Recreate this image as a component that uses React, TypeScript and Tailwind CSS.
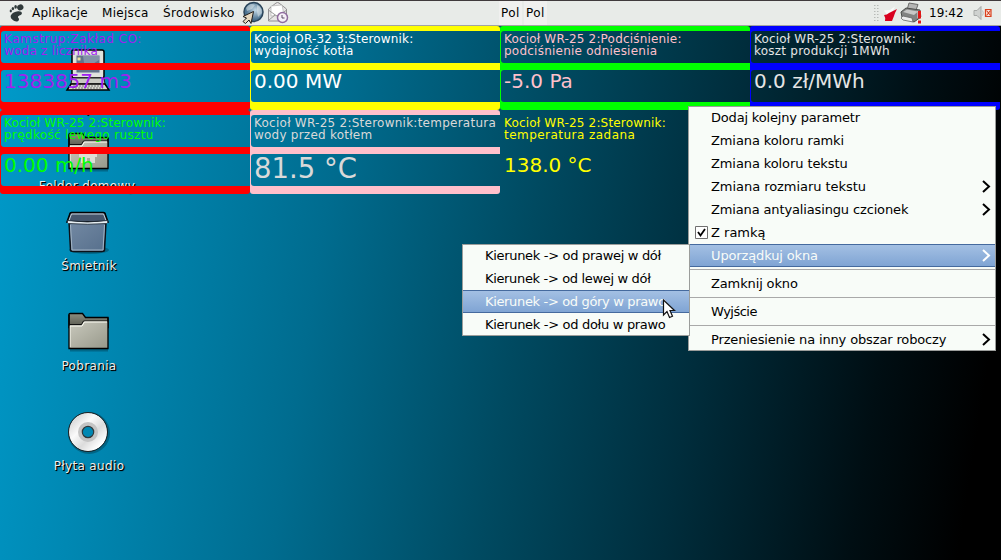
import React from "react";

type PanelProps = {
  frame: string;
  color: string;
  line1: string;
  line2: string;
  value: string;
  size?: string;
  track1?: string;
  track2?: string;
};

function Panel({
  frame,
  color,
  line1,
  line2,
  value,
  size = "text-[20px] leading-[30px]",
  track1 = "tracking-[0.18px]",
  track2 = "tracking-[0.23px]",
}: PanelProps) {
  return (
    <div className={`relative h-[84px] w-[250px] ${color}`}>
      <div className={`absolute inset-0 flex flex-col ${frame}`}>
        <div className="h-[39px] shrink-0 overflow-hidden rounded-t-[3px] pt-[5px] pl-px">
          <div className="h-8 rounded-l-[3px] shadow-[0_0_0_8px_currentColor]" />
        </div>
        <div className="h-[45px] shrink-0 overflow-hidden rounded-b-[3px] pt-[5px] pl-px">
          <div className="h-8 rounded-l-[3px] shadow-[0_0_0_8px_currentColor]" />
        </div>
      </div>
      <div className="relative h-10 pt-[7px] pl-[4px] text-[12px] leading-[12px] whitespace-nowrap">
        <div className={track1}>{line1}</div>
        <div className={track2}>{line2}</div>
      </div>
      <div className={`relative pl-1 whitespace-nowrap ${size}`}>{value}</div>
    </div>
  );
}

function Chevron({ light }: { light?: boolean }) {
  return (
    <svg className="mr-[4px] mb-[2px] ml-auto" width="9" height="13" viewBox="0 0 9 13">
      <path d="M1 1l6 5.500L1 12" fill="none" stroke={light ? "#fff" : "#000"} strokeWidth="2" />
    </svg>
  );
}

function Item({ text, track, arrow, active, check }: { text: string; track: string; arrow?: boolean; active?: boolean; check?: boolean }) {
  return (
    <div
      className={`flex h-[23px] shrink-0 items-center pt-px whitespace-nowrap ${check ? "pl-[6px]" : "pl-[22px]"} ${
        active ? "bg-linear-to-b from-[#a5c1e4] to-[#7ea3d3] text-[#f8fcf8] shadow-[inset_0_1px_#456a9e,inset_0_-1px_#456a9e]" : ""
      }`}
    >
      {check && (
        <svg className="mr-[3px] mb-[2px]" width="13" height="13" viewBox="0 0 13 13">
          <path d="M.5.5h12v12H.5z" fill="#fff" stroke="#707070" />
          <path d="M3 6l2.500 3.500L10 3" fill="none" stroke="#000" strokeWidth="1.800" />
        </svg>
      )}
      <span className={track}>{text}</span>
      {arrow && <Chevron light={active} />}
    </div>
  );
}

const Rule = () => (
  <div className="h-[5px] shrink-0 pt-[2px]">
    <div className="h-px bg-[#a9a9a9]" />
  </div>
);

function Folder({ home }: { home?: boolean }) {
  return (
    <svg width="44" height="40" viewBox="0 0 44 40">
      <defs>
        <linearGradient id="folder" x1="0" y1="0" x2="1" y2="1">
          <stop offset="0" stopColor="#c9c9bd" />
          <stop offset="1" stopColor="#97988a" />
        </linearGradient>
        <linearGradient id="tab" x1="0" y1="0" x2="0" y2="1">
          <stop offset="0" stopColor="#8d8e80" />
          <stop offset="1" stopColor="#55564c" />
        </linearGradient>
      </defs>
      <path d="M3 38h38" stroke="#003447" strokeOpacity=".4" strokeWidth="3" />
      <path d="M2 2.500q0-1 1-1h12.500l3 4H41v10H2z" fill="url(#tab)" stroke="#000" strokeWidth="1.300" />
      <path d="M3 12.500h11.500l2-3.500h24" fill="none" stroke="#111" />
      <path d="M2 13.500h12.500l2.500-4h24v27H2z" fill="url(#folder)" />
      <path d="M3 35V14h12l2.500-4H40" fill="none" stroke="#fffff5" />
      <path d="M2 2.500V36.500H41V5.500" fill="none" stroke="#000" strokeWidth="1.300" />
      {home && <path d="M12 22l9-6 9 6v3h-2v6h-5v-5h-3v5h-6v-6h-2z" fill="#deded4" />}
    </svg>
  );
}

function Label({ children }: { children: string }) {
  return (
    <span className="text-[12px] leading-4 tracking-[0.35px] whitespace-nowrap text-[#eee] [text-shadow:1px_1px_1px_#000,1px_1px_0_#000]">
      {children}
    </span>
  );
}

export default function App() {
  return (
    <div className="relative flex h-[560px] w-[1001px] flex-col overflow-hidden bg-[linear-gradient(99deg,#009bcb_0%,#0088b3_14%,#006c8f_33%,#004a61_52%,#002d3c_69%,#000e13_86%,#000_96%)] font-['DejaVu_Sans',sans-serif] text-[13px] text-black">
      <header className="relative z-20 flex h-[26px] shrink-0 items-center border-t border-b border-t-[#403a3c] border-b-[#a2a4a2] bg-[#e8ebe8] text-[12px]">
        <svg className="ml-[8px] shrink-0" width="17" height="18" viewBox="0 0 17 18">
          <g fill="#303a3b">
            <ellipse cx="12.300" cy="3.400" rx="3.200" ry="2.900" transform="rotate(-25 12.300 3.400)" />
            <ellipse cx="7.600" cy="2.800" rx="1.300" ry="1.900" />
            <ellipse cx="4.900" cy="4.600" rx="1.200" ry="1.600" />
            <ellipse cx="2.800" cy="7" rx="1.100" ry="1.400" />
            <path d="M2.800 11.500C4 8.500 7 7.500 10 7.200c2.500-.2 4 .5 3.900 2-.1 2-3.500 2.200-3.900 3.600-.3 1 1.200 1.200 1 2.600-.3 2-2.600 2.600-4.600 1.600C4.300 16 2 13.600 2.800 11.500z" />
          </g>
        </svg>
        <span className="ml-[7px] w-[70px] tracking-[0.22px]">Aplikacje</span>
        <span className="w-[61px] tracking-[0.3px]">Miejsca</span>
        <span className="w-[79px] tracking-[0.4px] whitespace-nowrap">Środowisko</span>
        <svg className="shrink-0" width="50" height="24" viewBox="0 0 50 24">
          <defs>
            <radialGradient id="globe" cx=".6" cy=".4">
              <stop offset="0" stopColor="#c3d9e6" />
              <stop offset="1" stopColor="#4a718f" />
            </radialGradient>
          </defs>
          <circle cx="11.500" cy="11" r="9.500" fill="url(#globe)" stroke="#2b4459" strokeWidth="1.500" />
          <path d="M4 7q4-6 9-3l-3 4-5 2M15 4q5 2 5 8l-4 4-1-5z" fill="#e4ebee" opacity=".5" />
          <path d="M11.500 10.500L1 15.500l3.500 1.500-3.500 3.500 2.500 2 3.500-3.500 2 3.500z" fill="#e5d8bf" stroke="#231f1b" strokeWidth="1" />
          <path d="M26.500 8l7.500-6q1.500-1 3 0l7.500 6v12h-18z" fill="#e7e5e5" stroke="#929092" />
          <path d="M29 5l11-1 2 10-13 1z" fill="#fff" stroke="#aaa" strokeWidth=".6" />
          <path d="M27 9.500l8.500 6 8.500-6M27 19l6-5" fill="none" stroke="#999" />
          <circle cx="40.500" cy="16.500" r="5" fill="#f5eff7" stroke="#8f6c9e" strokeWidth="1.500" />
          <path d="M40 14v3h2.500" fill="none" stroke="#594a62" />
        </svg>
        <div className="ml-[207px] flex gap-[2px] text-[12px] tracking-[0.4px]">
          <span className="flex h-6 w-[23px] items-center bg-[#f0f0ef] pl-[2px]">Pol</span>
          <span className="flex h-6 w-[23px] items-center bg-[#f0f0ef] pl-[2px]">Pol</span>
        </div>
        <svg className="ml-auto shrink-0" width="50" height="24" viewBox="0 0 50 24">
          {[4, 7, 10, 13, 16, 19].map((y) => (
            <path key={y} d={`M1 ${y}.500h1.500M4 ${y}.500h1.500`} stroke="#b7bab7" />
          ))}
          <path d="M11 9.500l6-.5 5-3.500-3 6-5 2z" fill="#fafafa" />
          <path d="M11 14q3 0 5-2l8-4q-2 3.500-3 7l-2 5h-7q1-3-1-6z" fill="#d9001f" />
          <path d="M34 9l2-7 9 1.500L42 12z" fill="#b5b5b4" stroke="#6b6b6a" />
          <path d="M28 11l5-4 14 2 1 7-7 5-12-5z" fill="#828382" stroke="#4c4d4b" />
          <path d="M30 11l4-2.500 11 2-4 3.500z" fill="#c8c8c7" />
          <path d="M30 15l9 2 1 4-10-2-2-2z" fill="#ededed" stroke="#666" strokeWidth=".8" />
          <path d="M46.500 10v7M46.500 19v3.500" stroke="#fff" strokeWidth="4.500" opacity=".5" />
          <path d="M46.500 10v7.500M46.500 19.500v3" stroke="#df1717" strokeWidth="3" />
        </svg>
        <span className="ml-[6px] w-[44px]">19:42</span>
        <svg className="mr-[9px] shrink-0" width="19" height="16" viewBox="0 0 19 16">
          <path d="M1 5.500h3l4-4v13l-4-4H1z" fill="#cfd2d0" stroke="#a6a9a7" />
          <path d="M9.500 5.500q1.500 2.500 0 5" fill="none" stroke="#c0c2c0" />
          <path d="M12.500 4.500h5.500v7h-5.500z" fill="#fbe9e3" stroke="#d9411e" strokeWidth="1.200" />
          <path d="M13.500 5.500l4 5M17.500 5.500l-4 5" stroke="#d9411e" strokeWidth="1.100" />
        </svg>
      </header>

      <div className="absolute top-[49px] left-[65px]">
        <svg width="46" height="43" viewBox="0 0 46 43">
          <path d="M7 2q0-1 1-1h29q2 0 2 2v24q0 2-2 2H9q-2 0-2-2z" fill="#e2e3dc" stroke="#000" strokeWidth="1.500" />
          <path d="M11 6h24v18H11z" fill="#62738b" stroke="#d9dde0" />
          <path d="M18 7h16v4L20 20z" fill="#8393a8" />
          <path d="M12.500 8.500h3v3h-3zM12.500 14h3v3h-3z" fill="#e9df9a" />
          <path d="M7 29h32l1 6H6z" fill="#c9cac2" stroke="#222" />
          <path d="M6 35h34l4 6H2z" fill="#d8d9d0" stroke="#000" strokeWidth="1.500" />
          <path d="M8 37h29M7 39h31" stroke="#777" strokeDasharray="2 1" />
        </svg>
      </div>
      <div className="absolute top-[100px] left-[29px] flex w-[120px] justify-center"><Label>Komputer</Label></div>
      <div className="absolute top-[132px] left-[67px]"><Folder home /></div>
      <div className="absolute top-[178px] left-[27px] flex w-[120px] justify-center"><Label>Folder domowy</Label></div>
      <div className="absolute top-[211px] left-[65px]">
        <svg width="46" height="44" viewBox="0 0 46 44">
          <defs>
            <linearGradient id="bin" x1="0" y1="0" x2="1" y2="1">
              <stop offset="0" stopColor="#7389a3" />
              <stop offset="1" stopColor="#566f8c" />
            </linearGradient>
          </defs>
          <ellipse cx="24" cy="39" rx="20" ry="4" fill="#003447" opacity=".4" />
          <path d="M4 11l1.500 28q0 1.500 3 1.500h28q3 0 3-1.500L41 11z" fill="url(#bin)" stroke="#0b1118" strokeWidth="1.500" />
          <path d="M5 2.500Q5 1.500 6.500 1.500h32q1.500 0 1.500 1l3 8.500H2z" fill="#46566c" stroke="#000" strokeWidth="1.500" />
          <path d="M4 9.500L6.500 3h32L41 9.500" fill="none" stroke="#c3d0da" />
          <path d="M2.500 9.500q20 3 40 0 1 2.500-1 3-18.500 1.500-38 0-1.500-.5-1-3z" fill="#e6eef2" stroke="#182531" strokeWidth=".8" />
          <path d="M5.500 14l1.500 25h31l1.500-25" fill="none" stroke="#a2b4c5" />
        </svg>
      </div>
      <div className="absolute top-[258px] left-[29px] flex w-[120px] justify-center"><Label>Śmietnik</Label></div>
      <div className="absolute top-[312px] left-[67px]"><Folder /></div>
      <div className="absolute top-[358px] left-[29px] flex w-[120px] justify-center"><Label>Pobrania</Label></div>
      <div className="absolute top-[411px] left-[67px]">
        <svg width="44" height="44" viewBox="0 0 44 44">
          <defs>
            <linearGradient id="disc" x1="0" y1="0" x2="1" y2="1">
              <stop offset="0" stopColor="#ddd" />
              <stop offset=".3" stopColor="#fafafa" />
              <stop offset=".65" stopColor="#dcdcdc" />
              <stop offset="1" stopColor="#fff" />
            </linearGradient>
          </defs>
          <circle cx="22" cy="22" r="19.500" fill="none" stroke="#003447" strokeOpacity=".4" strokeWidth="3" />
          <circle cx="21" cy="21" r="12.500" fill="none" stroke="url(#disc)" strokeWidth="13.500" />
          <circle cx="21" cy="21" r="19.500" fill="none" stroke="#1c2123" />
          <circle cx="21" cy="21" r="8" fill="none" stroke="#c4c4c4" strokeWidth="4" />
          <circle cx="21" cy="21" r="5.700" fill="none" stroke="#30393c" strokeWidth="1.200" />
        </svg>
      </div>
      <div className="absolute top-[458px] left-[29px] flex w-[120px] justify-center"><Label>Płyta audio</Label></div>

      <main className="relative grid w-[1000px] grid-cols-[repeat(4,250px)]">
        <Panel frame="text-[#f00]" color="text-[#a020f0]" line1="Kamstrup:Zakład CO:" line2="woda z licznika" value="1383857 m3" track1="tracking-[0.5px]" />
        <Panel frame="text-[#ff0]" color="text-white" line1="Kocioł OR-32 3:Sterownik:" line2="wydajność kotła" value="0.00 MW" />
        <Panel frame="text-[#0f0]" color="text-[#ffc0cb]" line1="Kocioł WR-25 2:Podciśnienie:" line2="podciśnienie odniesienia" value="-5.0 Pa" />
        <Panel frame="text-[#00f]" color="text-[#e5e5e5]" line1="Kocioł WR-25 2:Sterownik:" line2="koszt produkcji 1MWh" value="0.0 zł/MWh" />
        <Panel frame="text-[#f00]" color="text-[#0f0]" line1="Kocioł WR-25 2:Sterownik:" line2="prędkość lewego rusztu" value="0.00 m/h" track2="tracking-[0.34px]" />
        <Panel frame="text-[#ffc0cb]" color="text-[#d9d9d9]" line1="Kocioł WR-25 2:Sterownik:temperatura" line2="wody przed kotłem" value="81.5 °C" size="text-[27.5px] leading-[36px]" track1="tracking-[0.25px]" />
        <Panel frame="text-transparent" color="text-[#ff0]" line1="Kocioł WR-25 2:Sterownik:" line2="temperatura zadana" value="138.0 °C" track2="tracking-[0.46px]" />
      </main>

      <div className="absolute top-[106px] left-[688px] z-10 h-[245px] w-[308px] border border-[#9b9d9b] bg-[#f8fcf8]">
        <div className="-mt-px flex flex-col">
          <Item text="Dodaj kolejny parametr" track="tracking-[-0.18px]" />
          <Item text="Zmiana koloru ramki" track="tracking-[-0.1px]" />
          <Item text="Zmiana koloru tekstu" track="tracking-[-0.1px]" />
          <Item text="Zmiana rozmiaru tekstu" track="tracking-[-0.05px]" arrow />
          <Item text="Zmiana antyaliasingu czcionek" track="tracking-[-0.14px]" arrow />
          <Item text="Z ramką" track="" check />
          <Item text="Uporządkuj okna" track="tracking-[-0.13px]" active arrow />
          <Rule />
          <Item text="Zamknij okno" track="tracking-[-0.13px]" />
          <Rule />
          <Item text="Wyjście" track="tracking-[-0.5px]" />
          <Rule />
          <Item text="Przeniesienie na inny obszar roboczy" track="tracking-[-0.14px]" arrow />
        </div>
      </div>
      <div className="absolute top-[244px] left-[462px] z-10 h-[92px] w-[228px] border border-[#9b9d9b] bg-[#f8fcf8]">
        <div className="-mt-px flex flex-col">
          <Item text="Kierunek -> od prawej w dół" track="tracking-[-0.31px]" />
          <Item text="Kierunek -> od lewej w dół" track="tracking-[-0.34px]" />
          <Item text="Kierunek -> od góry w prawo" track="tracking-[-0.34px]" active />
          <Item text="Kierunek -> od dołu w prawo" track="tracking-[-0.31px]" />
        </div>
      </div>
      <svg className="absolute top-[299px] left-[662px] z-20" width="14" height="20" viewBox="0 0 14 20">
        <path d="M1.500 1v15l3.500-3.500 2.500 6 3-1.300-2.500-5.700h4.500z" fill="#fff" stroke="#111" strokeWidth="1.200" />
      </svg>
    </div>
  );
}
